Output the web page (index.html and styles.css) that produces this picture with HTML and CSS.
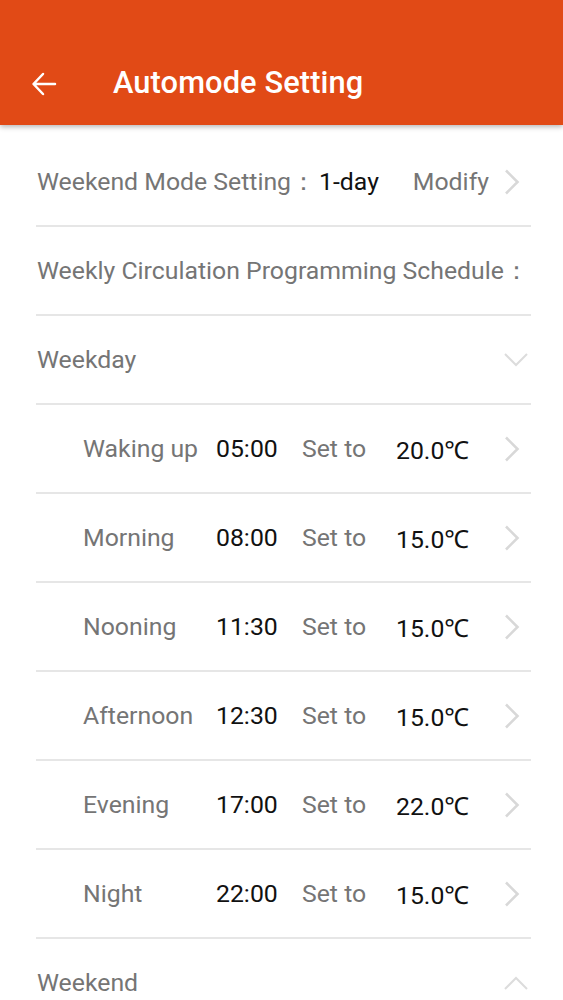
FILE: index.html
```html
<!DOCTYPE html>
<html>
<head>
<meta charset="utf-8">
<link rel="stylesheet" href="styles.css">
</head>
<body>
<header class="appbar">
  <svg class="back" width="26" height="24" viewBox="0 0 26 24"><path d="M24 12H3M12 2L2.5 12l9.5 10" fill="none" stroke="#fff" stroke-width="2.5" stroke-linecap="round" stroke-linejoin="round"/></svg>
  <h1 class="title">Automode Setting</h1>
</header>
<main class="list">
  <div class="row">
    <span class="label">Weekend Mode Setting：</span><span class="value day">1-day</span>
    <span class="spacer"></span>
    <span class="label">Modify</span>
    <svg class="chev" width="16" height="26" viewBox="0 0 16 26"><path d="M2 1.5l11.5 11.5L2 24.5" fill="none" stroke="#d8d8d8" stroke-width="2.6"/></svg>
  </div>
  <div class="row">
    <span class="label">Weekly Circulation Programming Schedule：</span>
  </div>
  <div class="row">
    <span class="label">Weekday</span>
    <span class="spacer"></span>
    <svg class="fold" width="24" height="14" viewBox="0 0 24 14"><path d="M1 1l11 11L23 1" fill="none" stroke="#dcdcdc" stroke-width="2"/></svg>
  </div>
  <div class="row sub"><span class="label name">Waking up</span><span class="value time">05:00</span><span class="label setto">Set to</span><span class="value temp">20.0℃</span><span class="spacer"></span><svg class="chev" width="16" height="26" viewBox="0 0 16 26"><path d="M2 1.5l11.5 11.5L2 24.5" fill="none" stroke="#d8d8d8" stroke-width="2.6"/></svg></div>
  <div class="row sub"><span class="label name">Morning</span><span class="value time">08:00</span><span class="label setto">Set to</span><span class="value temp">15.0℃</span><span class="spacer"></span><svg class="chev" width="16" height="26" viewBox="0 0 16 26"><path d="M2 1.5l11.5 11.5L2 24.5" fill="none" stroke="#d8d8d8" stroke-width="2.6"/></svg></div>
  <div class="row sub"><span class="label name">Nooning</span><span class="value time">11:30</span><span class="label setto">Set to</span><span class="value temp">15.0℃</span><span class="spacer"></span><svg class="chev" width="16" height="26" viewBox="0 0 16 26"><path d="M2 1.5l11.5 11.5L2 24.5" fill="none" stroke="#d8d8d8" stroke-width="2.6"/></svg></div>
  <div class="row sub"><span class="label name">Afternoon</span><span class="value time">12:30</span><span class="label setto">Set to</span><span class="value temp">15.0℃</span><span class="spacer"></span><svg class="chev" width="16" height="26" viewBox="0 0 16 26"><path d="M2 1.5l11.5 11.5L2 24.5" fill="none" stroke="#d8d8d8" stroke-width="2.6"/></svg></div>
  <div class="row sub"><span class="label name">Evening</span><span class="value time">17:00</span><span class="label setto">Set to</span><span class="value temp">22.0℃</span><span class="spacer"></span><svg class="chev" width="16" height="26" viewBox="0 0 16 26"><path d="M2 1.5l11.5 11.5L2 24.5" fill="none" stroke="#d8d8d8" stroke-width="2.6"/></svg></div>
  <div class="row sub"><span class="label name">Night</span><span class="value time">22:00</span><span class="label setto">Set to</span><span class="value temp">15.0℃</span><span class="spacer"></span><svg class="chev" width="16" height="26" viewBox="0 0 16 26"><path d="M2 1.5l11.5 11.5L2 24.5" fill="none" stroke="#d8d8d8" stroke-width="2.6"/></svg></div>
  <div class="row">
    <span class="label">Weekend</span>
    <span class="spacer"></span>
    <svg class="fold" width="24" height="14" viewBox="0 0 24 14"><path d="M1 13L12 2l11 11" fill="none" stroke="#dcdcdc" stroke-width="2"/></svg>
  </div>
</main>
</body>
</html>
```
FILE: styles.css
```css
* { box-sizing: border-box; }
html, body { margin: 0; padding: 0; background: #fff; }
body { font-family: Roboto, "Noto Sans", sans-serif; width: 563px; height: 1000px; overflow: hidden; }
.appbar {
  height: 125px;
  background: #e14a16;
  display: flex;
  align-items: center;
  padding: 40px 0 0 31px;
  box-shadow: 0 2px 5px rgba(0,0,0,0.28);
  position: relative;
  z-index: 1;
}
.back { display: block; margin-top: 2px; }
.title { margin: 0 0 0 56px; color: #fff; font-size: 30.8px; font-weight: 500; letter-spacing: 0.1px; }
.list { padding: 13px 32px 0 36px; }
.row {
  height: 89px;
  border-bottom: 2px solid #e6e6e6;
  display: flex;
  align-items: center;
  padding: 0 0 0 1px;
  font-size: 24.8px;
}
.label { color: #757575; }
.value { color: #111; }
.day { margin-left: 3px; }
.spacer { flex: 1; }
.chev { display: block; margin-right: 11px; margin-left: 15px; }
.fold { display: block; margin-right: 3px; }
.sub { padding-left: 47px; }
.name { width: 133px; }
.time { width: 86px; }
.setto { width: 94px; }
```
